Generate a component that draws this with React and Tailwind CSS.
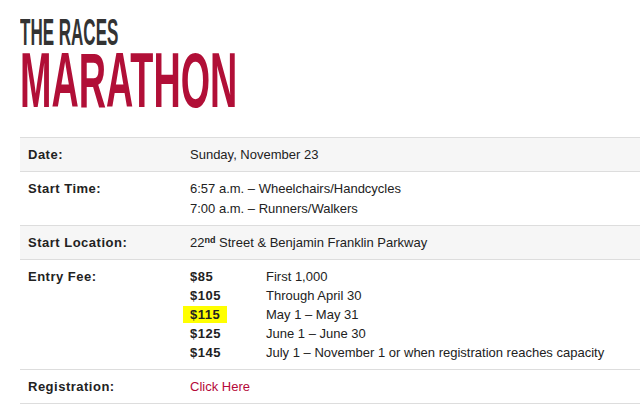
export default function App() {
  const fees = [
    { price: "$85", note: "First 1,000" },
    { price: "$105", note: "Through April 30" },
    { price: "$115", note: "May 1 – May 31", mark: true },
    { price: "$125", note: "June 1 – June 30" },
    { price: "$145", note: "July 1 – November 1 or when registration reaches capacity" },
  ];

  return (
    <div className="min-h-[419px] w-[640px] overflow-hidden bg-white font-['Liberation_Sans',Arial,sans-serif] text-[13px] text-[#222]">
      <header className="pl-[20px] pt-[16px]">
        <div className="h-[34px] origin-left scale-x-[0.46] font-['Liberation_Sans',Arial,sans-serif] text-[37px] font-bold leading-[34px] text-[#333]">
          THE RACES
        </div>
        <div className="h-[60px] origin-left scale-x-[0.49] font-['Liberation_Sans',Arial,sans-serif] text-[77px] font-bold leading-[60px] text-[#b10f37]">
          MARATHON
        </div>
      </header>

      <div className="ml-[20px] mt-[27px] border-t border-[#ddd]">
        <div className="flex border-b border-[#ddd] bg-[#f6f6f6] pb-[6px] pt-[7px] leading-[20px]">
          <div className="w-[170px] pl-[8px] font-bold tracking-[0.5px]">Date:</div>
          <div>Sunday, November 23</div>
        </div>
        <div className="flex border-b border-[#ddd] pb-[6px] pt-[7px] leading-[20px]">
          <div className="w-[170px] pl-[8px] font-bold tracking-[0.5px]">Start Time:</div>
          <div>
            <div>6:57 a.m. – Wheelchairs/Handcycles</div>
            <div>7:00 a.m. – Runners/Walkers</div>
          </div>
        </div>
        <div className="flex border-b border-[#ddd] bg-[#f6f6f6] pb-[6px] pt-[7px] leading-[20px]">
          <div className="w-[170px] pl-[8px] font-bold tracking-[0.5px]">Start Location:</div>
          <div>
            22<sup className="text-[9px] font-bold">nd</sup> Street &amp; Benjamin Franklin Parkway
          </div>
        </div>
        <div className="flex border-b border-[#ddd] pb-[7px] pt-[7px] leading-[19px]">
          <div className="w-[170px] pl-[8px] font-bold tracking-[0.5px]">Entry Fee:</div>
          <div className="flex flex-col">
            {fees.map((f) => (
              <div key={f.price} className="flex">
                <div className="w-[76px] font-bold tracking-[0.5px]">
                  {f.mark ? (
                    <span className="-ml-[7px] bg-[#ffff00] px-[7px] py-[1px]">{f.price}</span>
                  ) : (
                    f.price
                  )}
                </div>
                <div>{f.note}</div>
              </div>
            ))}
          </div>
        </div>
        <div className="flex border-b border-[#ddd] pb-[6px] pt-[7px] leading-[20px]">
          <div className="w-[170px] pl-[8px] font-bold tracking-[0.5px]">Registration:</div>
          <a href="#" className="text-[#b5093a]">
            Click Here
          </a>
        </div>
      </div>
    </div>
  );
}
